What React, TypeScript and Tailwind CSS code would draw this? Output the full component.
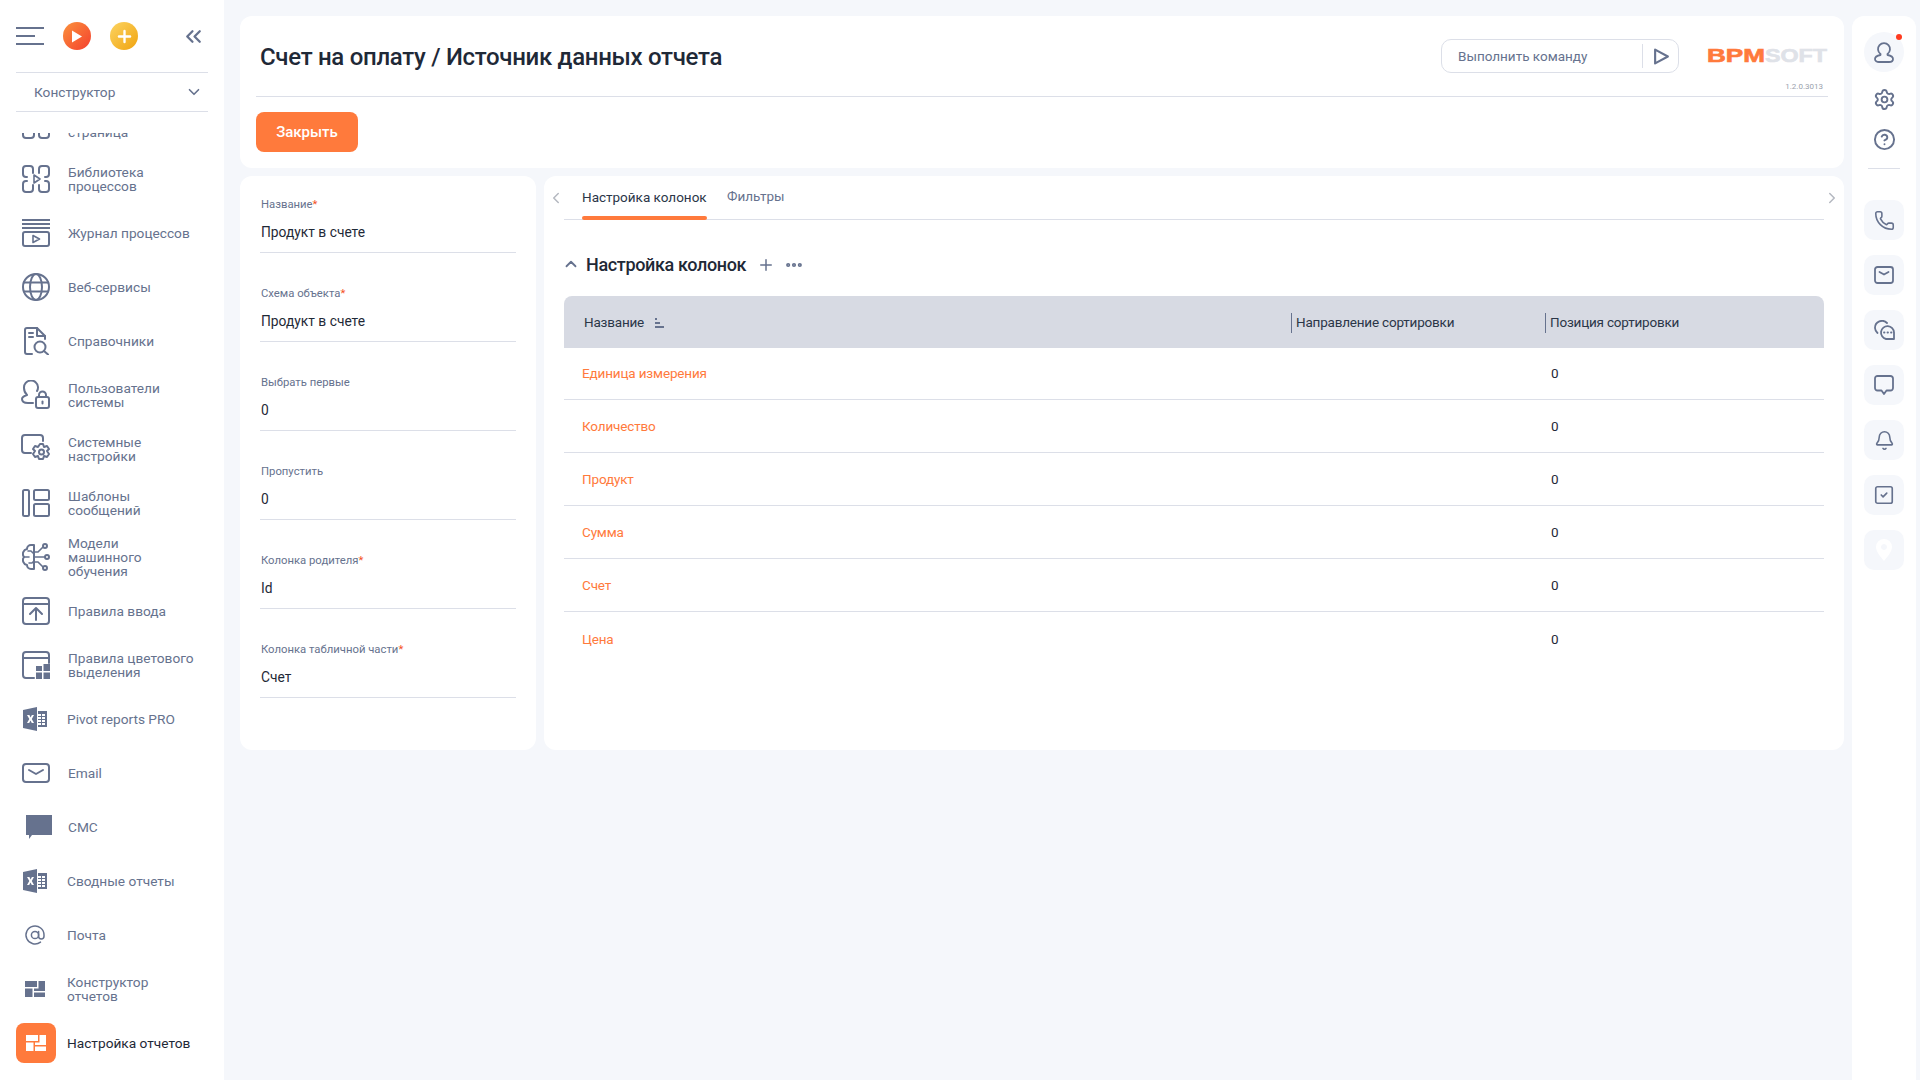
import { ReactNode } from "react";
import { Bell, ChevronDown, ChevronLeft, ChevronRight, ChevronUp, ChevronsLeft, CircleHelp, Ellipsis, Phone, Plus, Settings, SquareCheck } from "lucide-react";

const ICON = "#66728e";

function Ico({ children, w = 28, h = 28 }: { children: ReactNode; w?: number; h?: number }) {
  return (
    <svg width={w} height={h} viewBox="0 0 28 28" fill="none" stroke={ICON} strokeWidth="2" strokeLinecap="round" strokeLinejoin="round">
      {children}
    </svg>
  );
}

function ExcelIcon() {
  return (
    <svg width="24" height="24" viewBox="0 0 24 24" fill={ICON}>
      <path d="M0 3 L14 0 V24 L0 21 Z" />
      <path d="M4 8 H6.4 L7.6 10.6 L8.9 8 H11 L8.8 12 L11 16 H8.8 L7.5 13.4 L6.2 16 H4 L6.3 12 Z" fill="#fff" />
      <path d="M15 4 H24 V20 H15 V18 H18 V16 H15 V15 H18 V13 H15 V12 H18 V10 H15 V9 H18 V7 H15 Z M19 7 V9 H22 V7 Z M19 10 V12 H22 V10 Z M19 13 V15 H22 V13 Z M19 16 V18 H22 V16 Z" fillRule="evenodd" />
    </svg>
  );
}

const ReportGlyph = ({ color }: { color: string }) => (
  <svg width="20" height="16" viewBox="0 0 20 16" fill={color}>
    <path d="M0 0 H12 V6 H0 Z" />
    <path d="M13.5 0 H20 V10 H9 V7.5 H13.5 Z" />
    <path d="M0 7.5 H7.5 V16 H0 Z" />
    <path d="M9 11.5 H20 V16 H9 Z" />
  </svg>
);

const MENU: { label: string[]; icon: ReactNode; x?: number }[] = [
  {
    // the list is scrolled, only the bottom of this item shows
    label: ["\u00a0", "страница"],
    icon: (
      <Ico>
        <rect x="1" y="1" width="11" height="26" rx="3" />
        <rect x="17" y="1" width="10" height="26" rx="3" />
      </Ico>
    ),
  },
  {
    label: ["Библиотека", "процессов"],
    icon: (
      <Ico>
        <path d="M5 12 H4 a3 3 0 0 1 -3 -3 V4 a3 3 0 0 1 3 -3 h4 a3 3 0 0 1 3 3 v4" />
        <path d="M17 8 V4 a3 3 0 0 1 3 -3 h4 a3 3 0 0 1 3 3 v5 a3 3 0 0 1 -3 3 h-1" />
        <path d="M5 16 H4 a3 3 0 0 0 -3 3 v5 a3 3 0 0 0 3 3 h4 a3 3 0 0 0 3 -3 v-4" />
        <path d="M17 20 v4 a3 3 0 0 0 3 3 h4 a3 3 0 0 0 3 -3 v-5 a3 3 0 0 0 -3 -3 h-1" />
        <path d="M12 10 L18 14 L12 18 Z" strokeWidth="1.6" />
      </Ico>
    ),
  },
  {
    label: ["Журнал процессов"],
    icon: (
      <Ico>
        <path d="M0 1 H28 M0 5 H28 M0 9 H28" strokeLinecap="butt" />
        <rect x="1" y="13" width="26" height="14" rx="2" />
        <path d="M11 16.5 L17.5 20 L11 23.5 Z" strokeWidth="1.6" />
      </Ico>
    ),
  },
  {
    label: ["Веб-сервисы"],
    icon: (
      <Ico>
        <circle cx="14" cy="14" r="13" />
        <ellipse cx="14" cy="14" rx="6" ry="13" />
        <path d="M2 9.5 H26 M2 18.5 H26" />
      </Ico>
    ),
  },
  {
    label: ["Справочники"],
    icon: (
      <Ico>
        <path d="M10 27 H5 a2 2 0 0 1 -2 -2 V3 a2 2 0 0 1 2 -2 H15 L23 9 V12" />
        <path d="M15 1 V9 H23" />
        <path d="M7 6 H11 M7 10 H11" />
        <circle cx="18" cy="20" r="5.5" />
        <path d="M22 24 L26 27.5" />
      </Ico>
    ),
  },
  {
    label: ["Пользователи", "системы"],
    icon: (
      <svg width="30" height="30" viewBox="0 0 30 30" fill="none" stroke={ICON} strokeWidth="2" strokeLinecap="round" strokeLinejoin="round">
        <path d="M16 11 a7 7 0 0 0 1 -4 a7 7 0 0 0 -14 1 c0 3 1 5 3 7 c-3 1 -5 2 -5 4 c0 3 3 4 6 4 H12" />
        <rect x="15" y="17" width="13" height="11" rx="2" />
        <path d="M18 17 v-2 a3.5 3.5 0 0 1 7 0 v2" />
        <path d="M21.5 21.5 v2" />
      </svg>
    ),
  },
  {
    label: ["Системные", "настройки"],
    icon: (
      <svg width="30" height="30" viewBox="0 0 30 30" fill="none" stroke={ICON} strokeWidth="2" strokeLinecap="round" strokeLinejoin="round">
        <path d="M10 19 H4 a3 3 0 0 1 -3 -3 V4 a3 3 0 0 1 3 -3 H19 a3 3 0 0 1 3 3 v3" />
        <path d="M19 10 h3 l1 3 l3 -1 l2 3 l-2 2 l2 3 l-2 3 l-3 -1 l-1 3 h-4 l-1 -3 l-3 1 l-2 -3 l2 -3 l-2 -2 l2 -3 l3 1 Z" />
        <circle cx="20.5" cy="18" r="2.5" />
      </svg>
    ),
  },
  {
    label: ["Шаблоны", "сообщений"],
    icon: (
      <Ico>
        <rect x="1" y="1" width="6" height="26" rx="1.5" />
        <rect x="12" y="1" width="15" height="10" rx="1.5" />
        <rect x="12" y="15" width="15" height="12" rx="1.5" />
      </Ico>
    ),
  },
  {
    label: ["Модели", "машинного", "обучения"],
    icon: (
      <Ico>
        <path d="M12 2 h-3 a4 4 0 0 0 -4 4 a5 5 0 0 0 -3 8 a5 5 0 0 0 3 8 a4 4 0 0 0 4 4 h3 V2 Z" />
        <path d="M2 14 h5 M6 8 h3 l2 2 M7 20 h3 l2 -2" strokeWidth="1.6" />
        <path d="M12 9 h4 l5 -5 M12 14 h11 M12 19 h4 l5 5" strokeWidth="1.6" />
        <circle cx="23" cy="3" r="2" />
        <circle cx="25" cy="14" r="2" />
        <circle cx="23" cy="25" r="2" />
      </Ico>
    ),
  },
  {
    label: ["Правила ввода"],
    icon: (
      <Ico>
        <rect x="1" y="1" width="26" height="26" rx="3" />
        <path d="M1 7 H27" />
        <path d="M14 23 V12 M8 17 L14 11 L20 17" />
      </Ico>
    ),
  },
  {
    label: ["Правила цветового", "выделения"],
    icon: (
      <svg width="28" height="28" viewBox="0 0 28 28" fill="none" stroke={ICON} strokeWidth="2" strokeLinecap="round" strokeLinejoin="round">
        <path d="M12 27 H4 a3 3 0 0 1 -3 -3 V4 a3 3 0 0 1 3 -3 H24 a3 3 0 0 1 3 3 V12" />
        <path d="M1 7 H27" />
        <path d="M14 15 H20 V20 H14 Z M21.5 13 H28 V20 H21.5 Z M14 21.5 H20 V28 H14 Z M21.5 21.5 H28 V28 H21.5 Z" fill={ICON} stroke="none" />
      </svg>
    ),
  },
  { label: ["Pivot reports PRO"], icon: <ExcelIcon />, x: 1 },
  {
    label: ["Email"],
    icon: (
      <svg width="28" height="20" viewBox="0 0 28 20" fill="none" stroke={ICON} strokeWidth="2" strokeLinecap="round" strokeLinejoin="round">
        <rect x="1" y="1" width="26" height="18" rx="3" />
        <path d="M7 7 L14 11 L21 7" />
      </svg>
    ),
  },
  {
    label: ["СМС"],
    icon: (
      <svg width="26" height="24" viewBox="0 0 26 24" fill={ICON} className="ml-[6px]">
        <path d="M0 0 H26 V20 H6 L3 24 V20 H0 Z" />
      </svg>
    ),
  },
  { label: ["Сводные отчеты"], icon: <ExcelIcon />, x: 1 },
  {
    label: ["Почта"],
    icon: (
      <svg width="24" height="24" viewBox="0 0 24 24" fill="none" stroke={ICON} strokeWidth="1.5" strokeLinecap="round" strokeLinejoin="round">
        <circle cx="12" cy="12" r="3.6" />
        <path d="M15.6 8.4 V13.2 a2.7 2.7 0 0 0 5.4 0 V12 a9 9 0 1 0 -3.5 7.1" />
      </svg>
    ),
    x: 1,
  },
  { label: ["Конструктор", "отчетов"], icon: <ReportGlyph color={ICON} />, x: 1 },
];

const FIELDS = [
  { label: "Название", value: "Продукт в счете", required: true },
  { label: "Схема объекта", value: "Продукт в счете", required: true },
  { label: "Выбрать первые", value: "0" },
  { label: "Пропустить", value: "0" },
  { label: "Колонка родителя", value: "Id", required: true },
  { label: "Колонка табличной части", value: "Счет", required: true },
];

const ROWS = ["Единица измерения", "Количество", "Продукт", "Сумма", "Счет", "Цена"];

function Sidebar() {
  return (
    <aside className="flex h-full w-[224px] shrink-0 flex-col bg-white">
      <div className="flex h-[72px] items-center pl-4">
        <svg width="28" height="18" viewBox="0 0 28 18" stroke={ICON} strokeWidth="2" strokeLinecap="butt">
          <path d="M0 1 H28 M0 9 H19 M0 17 H28" />
        </svg>
        <div className="ml-[19px] flex h-7 w-7 items-center justify-center rounded-full bg-[linear-gradient(135deg,#fb923c,#f43f2e)]">
          <svg width="12" height="13" viewBox="0 0 12 13" fill="#fff"><path d="M1 0.5 L11 6.5 L1 12.5 Z" /></svg>
        </div>
        <div className="ml-[19px] flex h-7 w-7 items-center justify-center rounded-full bg-[linear-gradient(135deg,#fcd462,#f0a30f)]">
          <Plus size={19} color="#fff" strokeWidth={3} />
        </div>
        <ChevronsLeft size={25} color={ICON} strokeWidth={2.2} className="ml-[43px]" />
      </div>
      <div className="mx-4 flex h-[40px] items-center justify-between border-y border-[#dcdfe8] pl-[18px] pr-[5px] text-[13.7px] text-[#66728e]">
        Конструктор
        <ChevronDown size={18} color={ICON} strokeWidth={2.2} />
      </div>
      <div className="mt-[21px] min-h-0 flex-1 overflow-hidden">
        <div className="mt-[-35px] flex flex-col">
          {MENU.map((item, i) => (
            <div key={i} className="flex h-[54px] items-center pl-[16px]">
              <div className="flex h-10 w-10 shrink-0 items-center justify-center" style={{ marginLeft: item.x ? -1 : 0 }}>
                {item.icon}
              </div>
              <div className="ml-3 text-[13.7px] leading-[14px] text-[#66728e]">
                {item.label.map((l) => <div key={l}>{l}</div>)}
              </div>
            </div>
          ))}
          <div className="flex h-[54px] items-center pl-[16px]">
            <div className="flex h-10 w-10 items-center justify-center rounded-lg bg-[#ff7a3c]">
              <ReportGlyph color="#fff" />
            </div>
            <div className="ml-[11px] text-[13.7px] text-[#1f2937]">Настройка отчетов</div>
          </div>
        </div>
      </div>
    </aside>
  );
}

function Header() {
  return (
    <section className="h-[152px] rounded-xl bg-white px-4">
      <div className="flex h-[81px] items-start justify-between border-b border-[#dcdfe8]">
        <h1 className="ml-1 mt-[24px] text-[24px] font-medium leading-[34px] tracking-[-0.3px] text-[#1f2937]">Счет на оплату / Источник данных отчета</h1>
        <div className="flex items-start pr-px">
          <div className="mt-[23px] flex h-[34px] w-[238px] items-center rounded-[10px] border border-[#dcdfe8] pl-4 text-[13.5px] text-[#66728e]">
            <span className="flex-1 pt-px">Выполнить команду</span>
            <div className="flex h-6 w-9 items-center justify-center border-l border-[#dcdfe8] pl-[2px]">
              <svg width="17" height="17" viewBox="0 0 16 16" fill="none" stroke={ICON} strokeWidth="2" strokeLinejoin="round"><path d="M2 1.5 L14 8 L2 14.5 Z" /></svg>
            </div>
          </div>
          <div className="ml-7 flex w-[120px] flex-col items-end">
            <svg width="120" height="16" viewBox="0 0 120 16" className="mt-8 overflow-visible">
              <text x="0" y="14" textLength="58" lengthAdjust="spacingAndGlyphs" fontFamily="'Liberation Sans', sans-serif" fontWeight="700" fontSize="18" fill="#ff7a3c" stroke="#ff7a3c" strokeWidth="0.6">BPM</text>
              <text x="58" y="14" textLength="62" lengthAdjust="spacingAndGlyphs" fontFamily="'Liberation Sans', sans-serif" fontWeight="700" fontSize="18" fill="#dfe2e8" stroke="#dfe2e8" strokeWidth="0.6">SOFT</text>
            </svg>
            <div className="mr-1 mt-[18px] text-[8px] leading-[10px] text-[#9aa1ad]">1.2.0.3013</div>
          </div>
        </div>
      </div>
      <button className="mt-[15px] h-10 w-[102px] rounded-lg bg-[#ff7a3c] pt-px text-[15px] font-medium text-white">Закрыть</button>
    </section>
  );
}

function FormPanel() {
  return (
    <section className="flex w-[296px] shrink-0 flex-col gap-8 rounded-xl bg-white px-5 pt-5">
      {FIELDS.map((f) => (
        <div key={f.label} className="h-[57px] border-b border-[#dcdfe8] pl-px">
          <div className="pt-px text-[11.3px] leading-4 text-[#66728e]">
            {f.label}
            {f.required && <span className="text-[#f4511e]">*</span>}
          </div>
          <div className="mt-[9px] text-[13.8px] leading-5 text-[#1f2937]">{f.value}</div>
        </div>
      ))}
    </section>
  );
}

function ColumnsPanel() {
  return (
    <section className="flex-1 rounded-xl bg-white px-2">
      <div className="flex h-[44px] items-center">
        <ChevronLeft size={18} color="#b4b8c0" className="ml-[-5px] mr-[-1px] shrink-0" />
        <div className="flex h-full flex-1 items-end border-b border-[#dcdfe8] pl-[18px] text-[13.5px]">
          <div className="mb-[-1px] flex h-full w-[125px] flex-col items-start">
            <span className="mt-[10px] whitespace-nowrap leading-5 text-[#2b3648]">Настройка колонок</span>
            <span className="mt-auto h-1 w-full rounded-full bg-[#ff7a3c]" />
          </div>
          <span className="mb-[11px] ml-5 self-start pt-[10px] leading-5 text-[#66728e]">Фильтры</span>
        </div>
        <ChevronRight size={18} color="#b4b8c0" className="ml-[-1px] mr-[-5px] shrink-0" />
      </div>
      <div className="mx-3">
        <div className="flex h-[76px] items-center pt-[13px]">
          <ChevronUp size={18} color={ICON} strokeWidth={2.4} className="ml-[-2px] mr-[6px] mt-[-2px]" />
          <h2 className="text-[18px] font-medium tracking-[-0.36px] text-[#1f2937]">Настройка колонок</h2>
          <Plus size={18} color={ICON} className="ml-[11px]" />
          <Ellipsis size={20} color={ICON} strokeWidth={3} className="ml-[9px]" />
        </div>
        <div className="grid h-[52px] grid-cols-[727px_254px_1fr] items-center rounded-t-lg bg-[#d7dae3] text-[13.5px] tracking-[-0.2px] text-[#2b3648]">
          <div className="flex items-center pl-5 pt-[1px]">
            Название
            <svg width="9" height="10" viewBox="0 0 9 10" fill={ICON} className="ml-[11px]">
              <path d="M0 0 H2 V2 H0 Z M0 4 H5 V6 H0 Z M0 8 H9 V10 H0 Z" />
            </svg>
          </div>
          <div className="mt-[1px] flex h-5 items-center border-l border-[#66728e] pl-1">Направление сортировки</div>
          <div className="mt-[1px] flex h-5 items-center border-l border-[#66728e] pl-1">Позиция сортировки</div>
        </div>
        {ROWS.map((r, i) => (
          <div key={r} className={`grid grid-cols-[727px_254px_1fr] items-center text-[13.5px] tracking-[-0.15px] ${i === 0 ? "h-[52px]" : "h-[53px] pt-px"} ${i < ROWS.length - 1 ? "border-b border-[#dcdfe8]" : ""}`}>
            <div className="pl-[18px] text-[#ff7a3c]">{r}</div>
            <div />
            <div className="pl-[6px] text-[#1f2937]">0</div>
          </div>
        ))}
      </div>
    </section>
  );
}

function RailButton({ children }: { children: ReactNode }) {
  return <div className="flex h-10 w-10 items-center justify-center rounded-[10px] bg-[#f5f7fb]">{children}</div>;
}

function Rail() {
  return (
    <aside className="ml-2 mt-4 flex w-16 shrink-0 flex-col items-center rounded-t-xl bg-white">
      <div className="relative mt-4 flex h-10 w-10 items-center justify-center rounded-full bg-[#f5f7fb]">
        <svg width="20" height="22" viewBox="0 0 20 22" fill="none" stroke={ICON} strokeWidth="1.8" strokeLinecap="round" strokeLinejoin="round">
          <path d="M6.5 13 a6 6 0 1 1 7 0 v1 c3 .5 5.5 1.5 5.5 4 c0 2 -2 3 -4 3 H5 c-2 0 -4 -1 -4 -3 c0 -2.500 2.500 -3.500 5.500 -4 Z" />
        </svg>
        <span className="absolute right-[2px] top-[2px] h-[6px] w-[6px] rounded-full bg-[#ff3b1f]" />
      </div>
      <Settings size={23} color={ICON} strokeWidth={2} className="mt-[16px]" />
      <CircleHelp size={23} color={ICON} strokeWidth={2} className="mt-[17px]" />
      <div className="mt-[17px] h-px w-8 bg-[#dcdfe8]" />
      <div className="mt-[31px] flex flex-col gap-[15px]">
        <RailButton><Phone size={21} color={ICON} strokeWidth={1.8} /></RailButton>
        <RailButton>
          <svg width="20" height="18" viewBox="0 0 20 18" fill="none" stroke={ICON} strokeWidth="1.8" strokeLinecap="round" strokeLinejoin="round">
            <rect x="1" y="1" width="18" height="16" rx="2.5" />
            <path d="M5.500 6 L10 8.500 L14.500 6" />
          </svg>
        </RailButton>
        <RailButton>
          <svg width="21" height="20" viewBox="0 0 21 20" fill="none" stroke={ICON} strokeWidth="1.8" strokeLinecap="round" strokeLinejoin="round">
            <path d="M3.500 13 a7 7 0 0 1 -2.500 -5 a7 7 0 0 1 12 -5" />
            <path d="M20 19 H12 a6.500 6.500 0 1 1 8 -6.500 Z" />
            <path d="M10 12.500 h.5 M13.500 12.500 h.5 M17 12.500 h.5" />
          </svg>
        </RailButton>
        <RailButton>
          <svg width="20" height="20" viewBox="0 0 20 20" fill="none" stroke={ICON} strokeWidth="1.8" strokeLinecap="round" strokeLinejoin="round">
            <path d="M3.500 1 H16.500 a2.500 2.500 0 0 1 2.500 2.500 V13 a2.500 2.500 0 0 1 -2.500 2.500 H12.500 L10 19 L7.500 15.500 H3.500 a2.500 2.500 0 0 1 -2.500 -2.500 V3.500 a2.500 2.500 0 0 1 2.500 -2.500 Z" />
          </svg>
        </RailButton>
        <RailButton><Bell size={21} color={ICON} strokeWidth={1.8} /></RailButton>
        <RailButton><SquareCheck size={22} color={ICON} strokeWidth={1.8} /></RailButton>
        <RailButton>
          <svg width="16" height="22" viewBox="0 0 16 22" fill="#fff" fillRule="evenodd">
            <path d="M8 0 a8 8 0 0 1 8 8 c0 5 -5 10 -8 14 c-3 -4 -8 -9 -8 -14 a8 8 0 0 1 8 -8 Z M8 5 a3 3 0 1 0 .01 0 Z" />
          </svg>
        </RailButton>
      </div>
    </aside>
  );
}

export default function App() {
  return (
    <div className="flex h-screen w-full overflow-hidden bg-[#f5f7fb] font-['Roboto',sans-serif]">
      <Sidebar />
      <main className="ml-4 mt-4 flex w-[1604px] shrink-0 flex-col gap-2">
        <Header />
        <div className="flex h-[574px] gap-2">
          <FormPanel />
          <ColumnsPanel />
        </div>
      </main>
      <Rail />
    </div>
  );
}
